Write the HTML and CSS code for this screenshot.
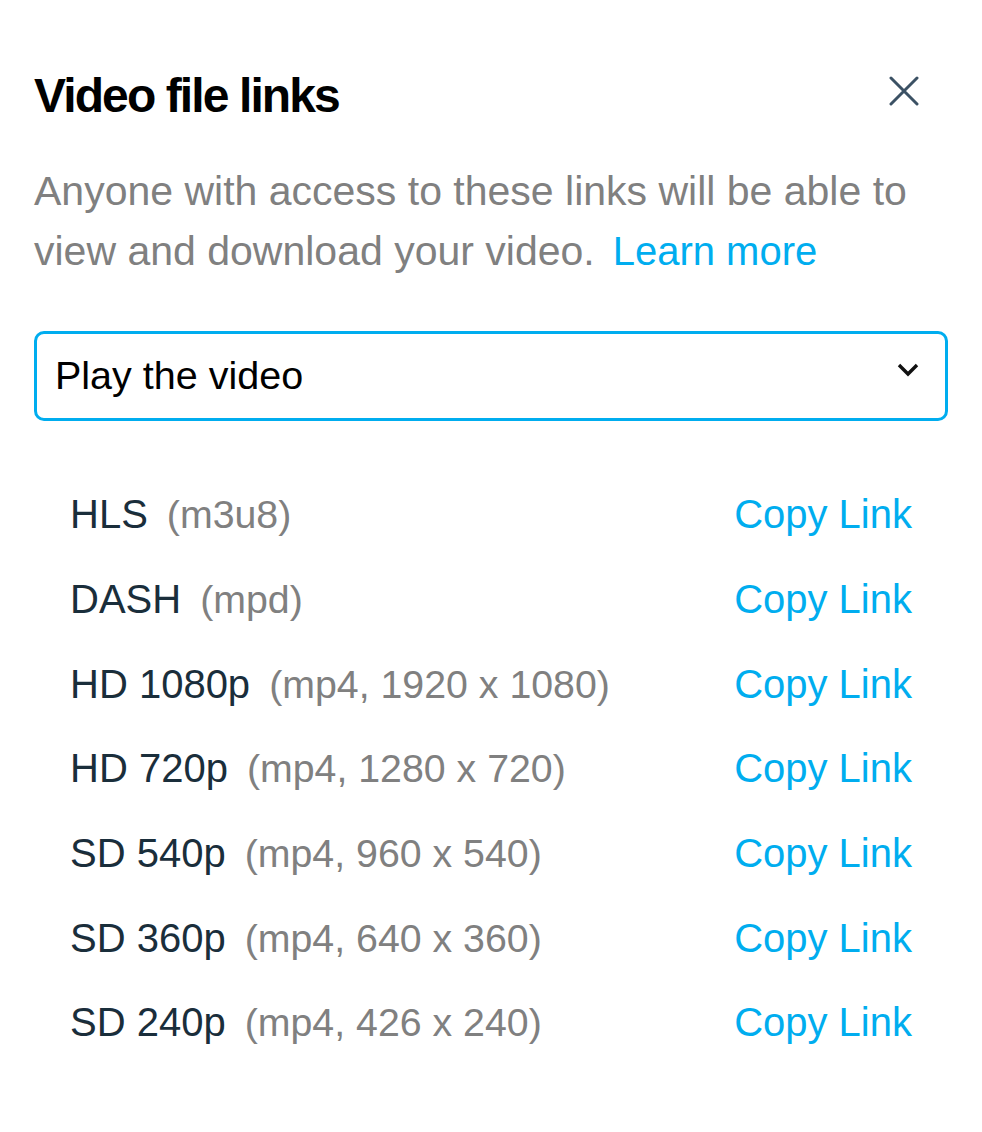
FILE: index.html
```html
<!DOCTYPE html>
<html lang="en">

<head>
    <meta charset="UTF-8">
    <meta name="viewport" content="width=device-width, initial-scale=1.0">
    <title>Video file links</title>

    <link rel="stylesheet" href="styles.css">

</head>

<body>
    <div class="modal">
        <header class="header">
            <h1 class="title">Video file links</h1>
            <button class="close" aria-label="Close">
                <svg width="30" height="30" viewBox="0 0 30 30">
                    <path d="M2 2 L28 28 M28 2 L2 28" stroke="#3b5164" stroke-width="3" stroke-linecap="round" fill="none"/>
                </svg>
            </button>
        </header>

        <p class="descricao">Anyone with access to these links will be able to view and download your video.<a href="#" class="link saibaMais">Learn more</a></p>

        <div class="select">
            <span>Play the video</span>
            <svg class="chevron" width="22" height="14" viewBox="0 0 22 14">
                <path d="M2 2 L11 11 L20 2" stroke="#111" stroke-width="3.4" fill="none"/>
            </svg>
        </div>

        <ul class="lista">
            <li class="linha"><span class="nome">HLS<span class="formato">(m3u8)</span></span><a href="#" class="link">Copy Link</a></li>
            <li class="linha"><span class="nome">DASH<span class="formato">(mpd)</span></span><a href="#" class="link">Copy Link</a></li>
            <li class="linha"><span class="nome">HD 1080p<span class="formato">(mp4, 1920 x 1080)</span></span><a href="#" class="link">Copy Link</a></li>
            <li class="linha"><span class="nome">HD 720p<span class="formato">(mp4, 1280 x 720)</span></span><a href="#" class="link">Copy Link</a></li>
            <li class="linha"><span class="nome">SD 540p<span class="formato">(mp4, 960 x 540)</span></span><a href="#" class="link">Copy Link</a></li>
            <li class="linha"><span class="nome">SD 360p<span class="formato">(mp4, 640 x 360)</span></span><a href="#" class="link">Copy Link</a></li>
            <li class="linha"><span class="nome">SD 240p<span class="formato">(mp4, 426 x 240)</span></span><a href="#" class="link">Copy Link</a></li>
        </ul>
    </div>
</body>

</html>
```

FILE: styles.css
```css
body {
    font-family: "Liberation Sans", Arial, Helvetica, sans-serif;
    background-color: #ffffff;
    margin: 0px;
}

.modal {
    padding: 67px 34px 40px 34px;
}

.header {
    display: flex;
    justify-content: space-between;
    align-items: flex-start;
}

.title {
    font-size: 48px;
    line-height: 1.2;
    font-weight: bold;
    color: #000000;
    letter-spacing: -1.9px;
    margin: 0px;
}

.close {
    background: none;
    border: none;
    padding: 0px;
    margin: 9px 29px 0 0;
    cursor: pointer;
}

.descricao {
    font-size: 41px;
    line-height: 60px;
    color: #808080;
    margin: 36px 0 50px 0;
}

.link {
    color: #00adef;
    text-decoration: none;
}

.saibaMais {
    font-size: 40px;
    margin-left: 18px;
}

.select {
    height: 84px;
    border: 3px solid #00adef;
    border-radius: 10px;
    display: flex;
    justify-content: space-between;
    align-items: center;
    padding: 0 26px 0 18px;
    font-size: 39.5px;
    color: #000000;
}

.chevron {
    margin-top: -12px;
}

.lista {
    list-style: none;
    margin: 52px 0 0 0;
    padding: 0 36px;
}

.linha {
    height: 84.67px;
    display: flex;
    justify-content: space-between;
    align-items: center;
    font-size: 40px;
}

.nome {
    color: #1a2e3b;
}

.formato {
    color: #808080;
    font-size: 39.3px;
    margin-left: 19px;
}
```
